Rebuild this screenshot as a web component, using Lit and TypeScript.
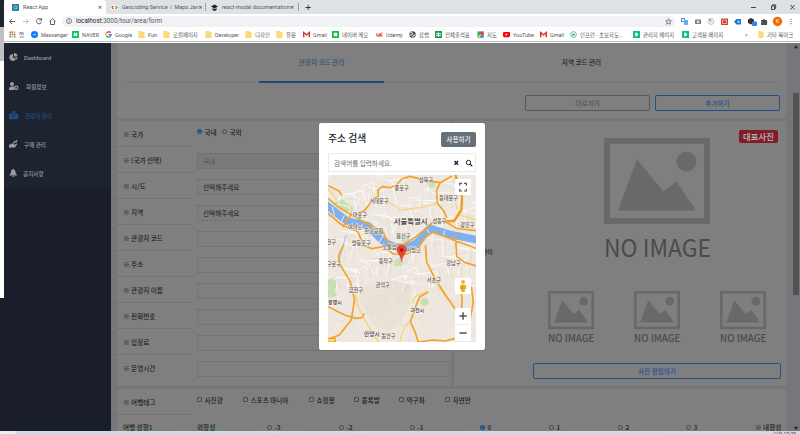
import { LitElement, html, css, svg, nothing } from "lit";
import { customElement, property } from "lit/decorators.js";

const w = (n: number) => `width:${n}px`;

const bmIcon: Record<string, unknown> = {
  apps: svg`${["#ea4335", "#ea4335", "#fbbc04", "#4285f4", "#34a853", "#ea4335", "#34a853", "#fbbc04", "#4285f4"].map((c, i) => svg`<rect x=${1 + (i % 3) * 5} y=${1 + Math.floor(i / 3) * 5} width="3.6" height="3.6" fill=${c}/>`)}`,
  msg: svg`<circle cx="8" cy="8" r="8" fill="#0a7cff"/><path d="M3 10 7 6l2 2 4-2-4 4-2-2z" fill="#fff"/>`,
  naver: svg`<path d="M0 0h16v16H0z" fill="#03c75a"/><path d="M4 4h3l2 3.500V4h3v8H9L7 8.500V12H4z" fill="#fff"/>`,
  google: svg`<g fill="none" stroke-width="3"><path d="M13 4A6 6 0 0 0 3 5" stroke="#ea4335"/><path d="M3 5a6 6 0 0 0 0 6" stroke="#fbbc04"/><path d="M3 11a6 6 0 0 0 9 1.500" stroke="#34a853"/><path d="M12 12.500A6 6 0 0 0 14 8.500H8" stroke="#4285f4"/></g>`,
  folder: svg`<path d="M1 0h8l2 2h4v14H1z" fill="#fbd974"/>`,
  gmail: svg`<path d="M0 2h16v12H0z" fill="#f3eeee"/><path d="M1.500 14V3.500L8 9l6.500-5.500V14" fill="none" stroke="#d93025" stroke-width="3"/>`,
  memo: svg`<path d="M0 0h16v16H0z" fill="#06c43c"/><path d="M4 4h8v8H4z" fill="#fff"/>`,
  udemy: svg`<path d="M2 5v5q2 4 5 0V5M10 13q-3-2 0-5l4-4M10 9l5 3" fill="none" stroke="#ea5252" stroke-width="2.600"/>`,
  globe: svg`<circle cx="8" cy="8" r="7.500" fill="#4d5156"/><path d="M3 4q4-2 5 1T5 9 1 8M9 14q-1-4 2-4t3-2" fill="none" stroke="#fff" stroke-width="2.200"/>`,
  sheet: svg`<path d="M0 0h16v16H0z" fill="#159a55"/><path d="M2 6h12M2 10h12M8 3v11" stroke="#fff" stroke-width="2"/>`,
  map: svg`<path d="M1 1h14v14H1z" fill="#34a853"/><path d="M1 15 15 1v14z" fill="#4285f4"/><path d="M2 15 14 3" stroke="#fbe17a" stroke-width="3"/><circle cx="11" cy="5" r="4" fill="#ea4335"/>`,
  yt: svg`<rect y="2" width="16" height="12" rx="3" fill="#f00"/><path d="M6 5l5 3-5 3z" fill="#fff"/>`,
  inf: svg`<circle cx="8" cy="8" r="6.500" fill="none" stroke="#45b979" stroke-width="2"/><path d="M4 9q4-6 8-1-4 5-8 1" fill="#45b979"/>`,
  play: svg`<path d="M0 0h16v16H0z" fill="#0abf8d"/><path d="M5 4h4l3 4-3 4H5z" fill="#fff"/>`,
};

const bookmarks: [number, string, string][] = [
  [9, "apps", "앱"], [31, "msg", "Messenger"], [72, "naver", "NAVER"], [105, "google", "Google"],
  [138, "folder", "Fun"], [163, "folder", "로컬페이지"], [205, "folder", "Developer"], [245, "folder", "디자인"],
  [276, "folder", "유용"], [303, "gmail", "Gmail"], [332, "memo", "네이버 메모"], [376, "udemy", "Udemy"],
  [409, "globe", "잡썸"], [435, "sheet", "전체출석표"], [477, "map", "지도"], [503, "yt", "YouTube"],
  [540, "gmail", "Gmail"], [570, "inf", "인프런 - 초보자도..."], [633, "play", "관리자 페이지"], [682, "play", "고객용 페이지"],
];

@customElement("browser-chrome")
class BrowserChrome extends LitElement {
  static styles = css`
    :host { display: block; height: 43px; font: 5.4px Roboto, "Noto Sans CJK KR", sans-serif; color: #55585c; white-space: nowrap; }
    svg { display: block; flex: none; }
    .tabs { display: flex; align-items: center; height: 14px; background: #dee1e6; }
    .tab { display: flex; align-items: center; height: 14px; box-sizing: border-box; }
    .tab b { margin-left: auto; font: 7.5px/7px "Noto Sans"; color: #3c4043; }
    .tab span { padding-left: 4px; font-size: 5.5px; }
    .one { width: 102px; background: #fff; border-radius: 3px 3px 0 0; padding: 0 4px 0 8px; }
    .two { width: 99px; padding: 0 4px 0 5px; }
    .three { width: 94px; padding: 0 4px 0 5px; border-left: 1px solid #9a9da1; border-right: 1px solid #9a9da1; height: 8px; }
    .plus { font: 11px/10px "Noto Sans"; color: #333; padding-left: 6px; }
    .win { margin-left: auto; display: flex; margin-right: 5px; }
    .bar { height: 14px; background: #fff; display: flex; align-items: center; }
    .nav { width: 58px; }
    .omni { width: 613px; height: 11px; border-radius: 6px; background: #f0f2f5; display: flex; align-items: center; box-sizing: border-box; padding: 0 3px 0 4px; font-size: 6.3px; }
    .omni span { padding-left: 4px; flex: 1; }
    .omni i { font-style: normal; color: #222; }
    .ext { width: 121px; }
    .marks { height: 14px; background: #fff; display: flex; align-items: center; border-bottom: 1px solid #b9b9b9; box-sizing: border-box; padding-left: 5px; }
    .mark { display: flex; align-items: center; gap: 3px; flex: none; }
  `;
  render() {
    return html`
      <div class="tabs">
        <div class="tab one">
          <svg width="7" height="7" viewBox="0 0 14 14"><rect width="14" height="14" rx="2" fill="#26798f"/><g fill="none" stroke="#8be0f2"><ellipse cx="7" cy="7" rx="5.500" ry="2"/><ellipse cx="7" cy="7" rx="2" ry="5.500"/></g></svg>
          <span>React App</span><b>×</b>
        </div>
        <div class="tab two">
          <svg width="7" height="7" viewBox="0 0 14 14"><rect y="2" width="14" height="10" rx="3" fill="#fff"/><path d="M5 4 2 7l3 3" stroke="#ea4335" stroke-width="2.500" fill="none"/><path d="M9 4l3 3-3 3" stroke="#34a853" stroke-width="2.500" fill="none"/></svg>
          <span>Geocoding Service &nbsp;|&nbsp; Maps Jav</span><b>×</b>
        </div>
        <div class="tab three">
          <svg width="7" height="7" viewBox="0 0 14 14"><path d="M7 1 14 5 7 9 0 5zM3 8l4 2.500L11 8v4l-4 2-4-2z" fill="#222"/></svg>
          <span>react-modal documentation</span><b>×</b>
        </div>
        <span class="plus">+</span>
        <svg class="win" width="48" height="10" viewBox="0 0 48 10" fill="none" stroke="#333" stroke-width=".9"><path d="M4 5.500h5M24.500 4h3v3.500h-3zM25.500 4V2.800h3.200v3.600h-1M43.500 3l4 4.500M47.500 3l-4 4.500"/></svg>
      </div>
      <div class="bar">
        <svg class="nav" width="58" height="14" viewBox="0 0 58 14" fill="none" stroke="#50545a" stroke-width=".9"><path d="M11 7.500H6M8 5 5.500 7.500 8 10"/><path d="M19 7.500h5M22 5l2.500 2.500L22 10" stroke="#b4b7ba"/><path d="M37 5.500a2.600 2.600 0 1 0 .5 2.500M37.500 4v2.200h-2.200"/><path d="M45.500 7.500 48.500 4.700l3 2.800M46.500 7v3.500h4V7"/></svg>
        <div class="omni">
          <svg width="6" height="6" viewBox="0 0 12 12" fill="none" stroke="#5f6368" stroke-width="1.500"><circle cx="6" cy="6" r="5"/><path d="M6 5v4M6 2.500v1.200"/></svg>
          <span><i>localhost</i>:3000/tour/area/form</span>
          <svg width="7" height="7" viewBox="0 0 14 14" fill="none" stroke="#555" stroke-width="1.400"><path d="M7 1.500 8.700 5.500l4 .3-3 2.700 1 4L7 10.300l-3.700 2.200 1-4-3-2.700 4-.3z"/></svg>
        </div>
        <svg class="ext" width="121" height="14" viewBox="0 0 121 14">
          <path d="M6 4h4v4H6z" fill="#4285f4"/><path d="M9 6h4v5H9z" fill="#7aa5ea"/><path d="M7 5h2v2H7z" fill="#fff"/>
          <rect x="20" y="5.500" width="6" height="4.500" rx="1" fill="#777"/><circle cx="23" cy="7.700" r="1.500" fill="#ddd"/>
          <circle cx="36" cy="7.500" r="3" fill="#eee" stroke="#aaa" stroke-width=".6"/><path d="M36 7.500 34.500 5" stroke="#555" stroke-width=".8"/>
          <path d="M46 4.500h7v6.500h-7z" fill="#cc4037"/><path d="M47.500 6h4v3.500h-4z" fill="none" stroke="#f6cdb9" stroke-width=".8"/>
          <path d="M59 7.700 61.500 5H66v5.500h-4.500z" fill="#1679d8"/><path d="M62.500 6.500l2 2.500m0-2.500-2 2.500" stroke="#fff" stroke-width=".7"/>
          <path d="M73 5.500 76 4l3 1.500V9l-3 1.500L73 9z" fill="#333"/><rect x="77" y="7.500" width="5" height="4.500" rx="1" fill="#3b7ded"/>
          <path d="M86 6h2q.8-2.500 2 0h2v2q1 .8 0 1.500V11h-6V9q1.300-.8 0-1.500z" fill="#4a4d51"/>
          <circle cx="102.500" cy="7.500" r="4.700" fill="#ef6c00"/><text x="102.500" y="9.400" font-size="5" fill="#fff" text-anchor="middle">K</text>
          <g fill="#555"><circle cx="116" cy="5.300" r=".6"/><circle cx="116" cy="7.500" r=".6"/><circle cx="116" cy="9.700" r=".6"/></g>
        </svg>
      </div>
      <div class="marks">
        ${bookmarks.map(([x, icon, label], i) => html`
          <div class="mark" style=${w((bookmarks[i + 1]?.[0] ?? 745) - x)}>
            <svg width="7" height="7" viewBox="0 0 16 16">${bmIcon[icon]}</svg>${label}
          </div>`)}
        <div class="mark" style=${w(13)}>»</div>
        <div class="mark"><svg width="6" height="7" viewBox="0 0 16 16" preserveAspectRatio="none">${bmIcon.folder}</svg>기타 북마크</div>
      </div>`;
  }
}

const sideItems: [string, number, unknown][] = [
  ["Dashboard", 15, svg`<path d="M8 2a7 7 0 1 0 6 10L8 9z"/><path d="M10 0a7 7 0 0 1 7 7h-7z"/><path d="M11 9h6q0 3-2 4.500z"/>`],
  ["회원정보", 17, svg`<circle cx="6" cy="4" r="4"/><path d="M0 16v-3q1-4 5-4h3q2 0 3 2v5z"/><circle cx="14.500" cy="11.500" r="3.200" fill="none" stroke="currentColor" stroke-width="2.500"/>`],
  ["관광지 관리", 16, svg`<path d="M0 7l4-2 1 3 4 5 4-5 1-3 4 1v9l-5 2-4-1-5 1-4-2z"/><path d="M9 0a4 4 0 0 1 4 4q0 3-4 7-4-4-4-7a4 4 0 0 1 4-4z"/><circle cx="9" cy="4" r="1.500" fill="#1d2430"/>`],
  ["구매 관리", 15, svg`<path d="M0 9h3l2-2h6q1 3-3 3h3l4-3q3 0 1 2l-4 6H0z"/><path d="M9 6l3-3 2 1 2-4" fill="none" stroke="currentColor" stroke-width="2.500"/>`],
  ["공지사항", 14, svg`<path d="M8 0q5 1 5 6 0 4 3 6v1H1v-1q3-2 3-6 0-5 4-6zM6 14h5q-2 4-5 0z"/>`],
];

@customElement("side-menu")
class SideMenu extends LitElement {
  static styles = css`
    :host { display: block; width: 107px; background: linear-gradient(#1d2430 145px, #191e2a 146px); color: #9b9b9c; font: 500 5.6px Roboto, "Noto Sans CJK KR", sans-serif; }
    .item { display: flex; align-items: center; height: 29px; padding-left: 5px; white-space: nowrap; }
    .on { color: #1d518a; }
    svg { display: block; overflow: visible; }
  `;
  render() {
    return sideItems.map(([t, g, icon], i) => html`
      <div class="item ${i === 2 ? "on" : ""}">
        <div style=${w(g)}><svg width="9" height="9" viewBox="0 0 18 18" fill="currentColor">${icon}</svg></div>${t}
      </div>`);
  }
}

@customElement("no-image")
class NoImage extends LitElement {
  static styles = css`
    :host { display: block; }
    svg { display: block; width: 100%; overflow: visible; }
    text { font-family: "Noto Sans CJK KR", "Noto Sans", sans-serif; font-weight: 400; }
    .small { font-weight: 500; }
  `;
  @property({ type: Boolean }) small = false;
  render() {
    return html`<svg viewBox="0 0 106 120">
      <rect x="3" y="3" width="100" height=${this.small ? 82 : 80} fill="none" stroke="#696969" stroke-width="6"/>
      <path d="M14 72.500 33 21.500 59.500 53.500 72.500 43.500 92 72.500z" fill="#696969"/><circle cx="82.500" cy="23.500" r="10" fill="#696969"/>
      <text class=${this.small ? "small" : ""} x="0" y="118.500" font-size="24" textLength="107" lengthAdjust="spacingAndGlyphs" fill="#4b4b4b">NO IMAGE</text>
    </svg>`;
  }
}

const rows = ["국가", "(국가 선택)", "시/도", "지역", "관광지 코드", "주소", "관광지 이름", "전화번호", "입장료", "운영시간"];
const tags: [number, string][] = [[46, "사진광"], [66, "스포츠 마니아"], [45, "쇼핑왕"], [45, "올록발"], [46, "먹구파"], [40, "자연만"]];
const scores: [number, string][] = [[72, "-3"], [71, "-2"], [70, "-1"], [69, "0"], [69, "1"], [68, "2"], [69, "3"]];

@customElement("area-form")
class AreaForm extends LitElement {
  static styles = css`
    :host { flex: 1; display: flex; min-width: 0; overflow: hidden; color: #202020; font: 500 6.6px "Noto Sans CJK KR", sans-serif; white-space: nowrap;
      background: repeating-conic-gradient(#707076 0 25%, #7c7c80 0 50%) 0 0 / 2px 2px; }
    .page { width: 669px; margin-left: 6px; display: flex; flex-direction: column; gap: 3px; }
    .card { background: #7f7f7f; }
    .top { height: 75px; box-sizing: border-box; padding: 0 6px 0 8px; }
    .tabs { height: 40px; display: flex; justify-content: center; border-bottom: 1px dotted #6c6c70; box-sizing: border-box; padding-right: 2px; }
    .tab { width: 125px; margin: 0 67.5px; text-align: center; line-height: 38px; height: 38px; }
    .tab.on { color: #2f5074; border-bottom: 2px solid #1d4a78; }
    .acts { display: flex; justify-content: flex-end; gap: 5px; padding-top: 12px; }
    .btn { border: 1px solid #24508a; border-radius: 2px; color: #204f8e; text-align: center; height: 16px; line-height: 14px; width: 125px; box-sizing: border-box; }
    .btn.grey { border-color: #55595e; color: #50545a; }
    .mid { display: flex; gap: 3px; height: 265px; }
    .left { width: 334px; }
    .row { display: flex; height: 26px; align-items: center; }
    .lab { width: 75px; height: 26px; box-sizing: border-box; border-bottom: 1px dotted #6b6b6f; line-height: 26px; padding-left: 6px; margin-right: 5px; }
    .plain { border-color: transparent; }
    .input { width: 253px; height: 16px; border: 1px dotted #6a6a70; box-sizing: border-box; line-height: 14px; padding-left: 5px; margin-top: 1px; font-weight: 400; color: #1c1c1c; }
    .off { background: repeating-conic-gradient(#74777a 0 25%, #7b7c7e 0 50%) 0 0 / 2px 2px; color: #505457; }
    .opts { display: flex; align-items: center; padding-bottom: 5px; }
    .rad, .chk { width: 5px; height: 5px; box-sizing: border-box; border: 1px solid #4a4a4a; flex: none; border-radius: 50%; }
    .chk { border-radius: 1px; }
    .sel { background: #0d4a8a; border-color: #0d4a8a; box-shadow: inset 0 0 0 .5px #6b8cb0; }
    .it { display: flex; gap: 2.5px; align-items: center; flex: none; }
    .right { flex: 1; position: relative; }
    .side { height: 12px; padding-left: 16px; margin-top: -11px; width: 40px; box-sizing: border-box; font-size: 5.8px; }
    .badge { position: absolute; right: 8px; top: 9px; width: 39px; height: 13px; border-radius: 2px; background: #811c26; color: #aaa; text-align: center; font: 700 8.4px/12.5px "Noto Sans CJK KR"; }
    .big { width: 106px; margin: 17px 0 0 150px; }
    .thumbs { display: flex; gap: 40px; margin: 32px 0 0 94px; }
    .thumbs no-image { width: 46px; }
    .edit { width: 248px; margin: 20px 0 0 79px; }
    .bottom { flex: 1; height: 42px; overflow: hidden; }
    .last { height: 24px; }
    .bar { width: 8px; margin-left: auto; display: flex; flex-direction: column; align-items: center; color: #222; font-size: 4px; }
    .thumb { width: 6px; height: 202px; background: #505451; margin-top: 42px; }
    .up { line-height: 8px; height: 8px; }
    .dn { margin-top: auto; }
  `;
  field(i: number) {
    if (i === 0) return html`<div class="opts"><div class="it" style=${w(25)}><i class="rad sel"></i>국내</div><div class="it"><i class="rad"></i>국외</div></div>`;
    return html`<div class="input ${i === 1 ? "off" : ""}">${i === 1 ? "국내" : i < 4 ? "선택해주세요" : nothing}</div>`;
  }
  render() {
    return html`
      <div class="page">
        <div class="card top">
          <div class="tabs"><div class="tab on">관광지 코드 관리</div><div class="tab">지역 코드 관리</div></div>
          <div class="acts"><div class="btn grey">뒤로가기</div><div class="btn">추가하기</div></div>
        </div>
        <div class="mid">
          <div class="card left">
            ${rows.map((r, i) => html`<div class="row"><div class="lab ${i === 9 ? "plain" : ""}">※ ${r}</div>${this.field(i)}</div>`)}
          </div>
          <div class="card right">
            <div class="badge">대표사진</div>
            <no-image class="big"></no-image>
            <div class="side">사진 관리</div>
            <div class="thumbs">${[0, 1, 2].map(() => html`<no-image small></no-image>`)}</div>
            <div class="btn edit">사진 편집하기</div>
          </div>
        </div>
        <div class="card bottom">
          <div class="row"><div class="lab">※ 여행태그</div><div class="opts">${tags.map(([n, t]) => html`<div class="it" style=${w(n)}><i class="chk"></i>${t}</div>`)}</div></div>
          <div class="row last"><div class="lab plain">여행 성향1</div><div style=${w(70)}>외향성</div>
            ${scores.map(([n, t]) => html`<div class="it" style=${w(n)}><i class="rad ${t === "0" ? "sel" : ""}"></i>${t}</div>`)}<div>※ 내향성</div></div>
        </div>
      </div>
      <div class="bar"><span class="up">▲</span><div class="thumb"></div><span class="dn">▼</span></div>`;
  }
}

const orange = [
  "M28 197 60 212 70 226", "M72 322 98 282 118 283 140 270 162 240 180 228 178 210 192 200 215 203 235 195 250 177 275 169 312 178 340 184 366 188 402 168",
  "M366 188 355 212 358 250 378 275 386 293", "M28 235 60 262 100 285 135 305 170 322 200 345",
  "M28 280 70 315 118 335 135 375 160 386 195 380 225 402 265 402 300 386 320 352 345 336 400 358 474 385",
  "M190 330 215 375 255 375 290 352 325 325 345 305 375 300 415 325 474 332",
  "M75 375 60 405 62 430 95 485 108 540 98 600 62 645 30 657", "M28 560 78 585 112 595 130 593 138 580",
  "M330 516 305 530 292 560 276 605 290 635 300 666", "M322 375 325 425 350 475 382 525 412 568",
  "M300 666 345 660 380 663 412 655", "M412 345 416 410 440 427 474 438", "M460 500 466 545 456 600", "M420 490 432 530 430 600",
];
const labels: [number, number, string, number?][] = [
  [323, 186, "성북구"], [250, 209, "종로구"], [182, 248, "서대문구"], [391, 239, "동대문구"], [124, 290, "마포구"], [277, 311, "서울특별시", 22],
  [364, 308, "성동구"], [448, 322, "광진구"], [110, 328, "여의도"], [166, 340, "한강공원"], [255, 354, "용산구"], [128, 375, "영등포구"],
  [213, 388, "노들섬"], [286, 397, "서빙고"], [202, 428, "동작구"], [38, 371, "천구"], [46, 438, "구로구"], [406, 434, "강남구"], [347, 487, "서초구"],
  [193, 500, "관악구"], [112, 515, "금천구"], [49, 553, "광명시", 15], [297, 576, "과천시", 15], [160, 649, "안양시", 17], [210, 653, "동안구"],
];
const streets = Array.from({ length: 85 }, (_, i) => {
  const x = 30 + ((i * 97) % 440), y = 170 + ((i * 61) % 330), d = 14 + ((i * 13) % 40);
  return `M${x} ${y}l${d} ${(i % 5) * 7 - 14}l${(i % 7) * 4 - 12} ${d}`;
}).join("");

@customElement("address-modal")
class AddressModal extends LitElement {
  static styles = css`
    :host { position: absolute; left: 319px; top: 123px; width: 166px; height: 227px; box-sizing: border-box; padding: 9px; background: #fff; border-radius: 2px; box-shadow: 0 0 1px #555; font-family: "Noto Sans CJK KR", sans-serif; white-space: nowrap; }
    .head { display: flex; justify-content: space-between; height: 21px; align-items: flex-start; }
    h1 { margin: 0; font: 500 9.8px/12px "Noto Sans CJK KR"; color: #212529; }
    .use { width: 35px; height: 15px; border-radius: 2px; background: #66707a; color: #f4f4f4; font: 500 6.6px/15px "Noto Sans CJK KR"; text-align: center; }
    .search { display: flex; align-items: center; height: 19px; box-sizing: border-box; border: 1px solid #e9eaec; border-radius: 1px; padding: 0 2px 0 5px; margin-bottom: 2.5px; font-size: 6.6px; color: #6e6e6e; }
    .search svg { margin-left: auto; }
    .map { display: block; }
    text { fill: #62564f; font-size: 15.5px; text-anchor: middle; paint-order: stroke; stroke: #f5f1eb; stroke-width: 3px; font-weight: 500; }
    .city { fill: #383838; }
  `;
  render() {
    return html`
      <div class="head"><h1>주소 검색</h1><div class="use">사용하기</div></div>
      <div class="search">검색어를 입력하세요.
        <svg width="20" height="8" viewBox="0 0 20 8" fill="none" stroke="#222"><path d="M1.500 2l3.600 3.800M5.100 2 1.500 5.800" stroke-width="1.400"/><circle cx="15.500" cy="3.500" r="2.200"/><path d="M17 5l2.300 2.400" stroke-width="1.300"/></svg>
      </div>
      <svg class="map" width="148" height="167" viewBox="28 165 446 501" preserveAspectRatio="none">
        <path d="M0 100h500v600H0z" fill="#eee8e0"/>
        <path d="M120 530q20-50 70-45 50-15 90 20l-10 60-25 40-30 30-45-15-30-50z" fill="#e9e2d6"/>
        <g fill="#c8dfaf"><path d="M28 480l15-8 15 12-10 30 8 14-28 5zM40 248l30-10 35 25-5 15-30-10zM230 420l15-8 12 15-10 12-20-2zM245 350l25-5 5 22-20 5zM330 190l16-8 6 20-18 3z"/><circle cx="319" cy="545" r="12"/><path d="M400 182l12-12 10 12-15 14z"/></g>
        <path d=${streets} fill="none" stroke="#fff" stroke-width="2.500"/>
        <path d=${streets} transform="translate(9 14)" fill="none" stroke="#dcd4ca" stroke-width="1"/>
        <path d=${streets} transform="translate(-14 130)" fill="none" stroke="#ddd5c9" stroke-width="1"/>
        <g fill="none" stroke="#fad27b" stroke-width="4"><path d="M110 515 118 560 142 605 165 645 182 666M245 666 252 635 272 605M282 550 290 530 330 512M360 500 400 550M412 250 425 285 474 300M28 205 55 240M200 240 250 270 310 262 355 250M28 420 70 440"/></g>
        <path d="M20 253 85 303 150 318 180 350Q212 385 255 382 295 378 312 350L335 325 390 342 480 360" fill="none" stroke="#80b0ed" stroke-width="23"/>
        <path d="M40 260l8 26M77 286l-12 30M195 345l-14 25M325 326l12 20M380 331l-5 22" stroke="#e5eefa" stroke-width="3"/>
        <path d="M82 345l-10 40-12 40" fill="none" stroke="#9ac0e8" stroke-width="3"/>
        <path d=${orange.join("")} fill="none" stroke="#f3a329" stroke-width="5" stroke-linejoin="round"/>
        <path d="M412 165 424 205 432 232 430 270 408 303 386 303 350 300" fill="none" stroke="#ef9d20" stroke-width="7" stroke-linejoin="round"/>
        <path d="M28 655h22v11H28" fill="#fbdc78" stroke="#f3a329" stroke-width="4"/>
        ${labels.map(([x, y, t, s]) => svg`<text class=${s ? "city" : ""} x=${x} y=${y} style=${s ? `font-size:${s}px` : ""}>${t}</text>`)}
        <path d="M250 425Q248 411 241 401 236 395 236 390a14 14 0 0 1 28 0q0 5-5 11-7 10-9 24z" fill="#ea4335" stroke="#b31412" stroke-width="1"/><circle cx="250" cy="390" r="5" fill="#8b1410"/>
        <g fill="#fff"><path d="M411 177h48v48h-48zM411 474h48v48h-48zM411 564h48v99h-48z"/></g>
        <g fill="none" stroke="#555" stroke-width="3.500"><path d="M425 197v-7h7M438 190h7v7M445 206v7h-7M432 213h-7v-7"/><path d="M424 588h22M435 577v22M424 639h22" stroke-width="4.500"/></g>
        <path d="M416 613h38" stroke="#ddd" stroke-width="2"/>
        <circle cx="435" cy="486" r="6" fill="#f0b429"/><path d="M427 494h16l2 12-4 1-1 9h-10l-1-9-4-1z" fill="#eead1e"/><path d="M433 496v15" stroke="#c78612" stroke-width="2"/>
      </svg>`;
  }
}

@customElement("app-root")
class AppRoot extends LitElement {
  static styles = css`
    :host { display: block; position: relative; width: 800px; height: 434px; overflow: hidden; background: #fff; }
    .screen { display: flex; height: 431px; }
    .edge { width: 4px; flex: none; background: linear-gradient(#20242c 0 27px, #bfc1c2 27px 61px, #fff 61px 298px, #1b2028 298px); }
    .window { flex: 1; display: flex; flex-direction: column; min-width: 0; }
    .body { display: flex; height: 388px; }
    .task { height: 3px; background: linear-gradient(90deg, #e8f0f4 0 15px, #c2dfeb 16px, #cfd9e8 70%, #d4d8e6); overflow: hidden; text-align: right; font: 5px/6px "Noto Sans CJK KR", sans-serif; color: #333; box-sizing: border-box; padding-right: 4px; }
  `;
  render() {
    return html`
      <div class="screen">
        <div class="edge"></div>
        <div class="window"><browser-chrome></browser-chrome><div class="body"><side-menu></side-menu><area-form></area-form></div></div>
      </div>
      <div class="task">오전 12:38</div>
      <address-modal></address-modal>`;
  }
}
